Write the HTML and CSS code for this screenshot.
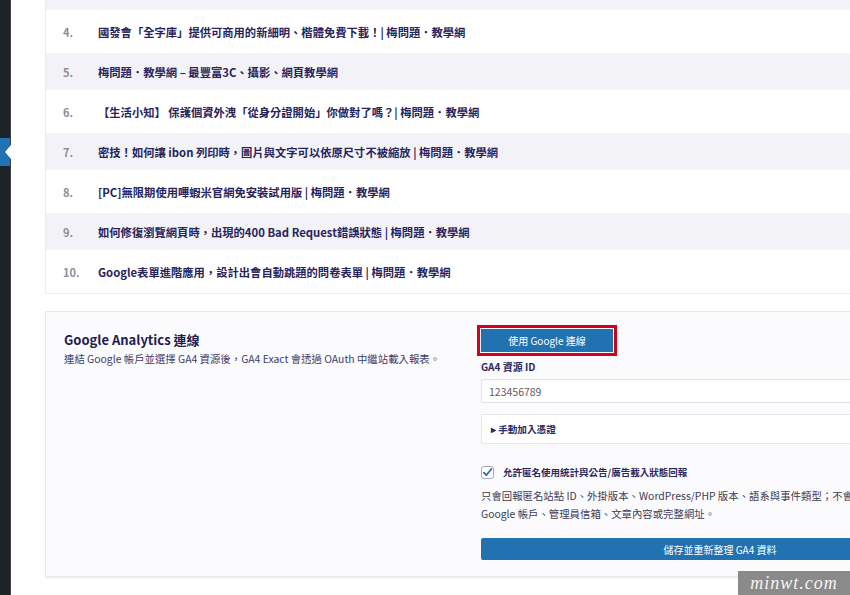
FILE: index.html
```html
<!DOCTYPE html>
<html lang="zh-Hant">
<head>
    <meta charset="UTF-8">
    <meta name="viewport" content="width=device-width, initial-scale=1.0">
    <title>GA4 Exact 設定</title>
    <link rel="stylesheet" href="styles.css">
</head>
<body>

    <div class="screen">
        <aside class="admin-menu">
            <span class="menu-current"></span>
        </aside>

        <main class="content">
            <!-- popular posts list, cropped at the top -->
            <ol class="top-list">
                <li class="alt cut"></li>
                <li><span class="num">4.</span><span class="title">國發會「全字庫」提供可商用的新細明、楷體免費下載！| 梅問題．教學網</span></li>
                <li class="alt"><span class="num">5.</span><span class="title">梅問題．教學網 – 最豐富3C、攝影、網頁教學網</span></li>
                <li><span class="num">6.</span><span class="title">【生活小知】 保護個資外洩「從身分證開始」你做對了嗎？| 梅問題．教學網</span></li>
                <li class="alt"><span class="num">7.</span><span class="title">密技！如何讓 ibon 列印時，圖片與文字可以依原尺寸不被縮放 | 梅問題．教學網</span></li>
                <li><span class="num">8.</span><span class="title">[PC]無限期使用嗶蝦米官網免安裝試用版 | 梅問題．教學網</span></li>
                <li class="alt"><span class="num">9.</span><span class="title">如何修復瀏覽網頁時，出現的400 Bad Request錯誤狀態 | 梅問題．教學網</span></li>
                <li><span class="num">10.</span><span class="title">Google表單進階應用，設計出會自動跳題的問卷表單 | 梅問題．教學網</span></li>
            </ol>

            <section class="ga-box">
                <div class="ga-intro">
                    <h2>Google Analytics 連線</h2>
                    <p>連結 Google 帳戶並選擇 GA4 資源後，GA4 Exact 會透過 OAuth 中繼站載入報表。</p>
                </div>

                <div class="ga-form">
                    <button class="btn connect-btn">使用 Google 連線</button>
                    <label class="field-label">GA4 資源 ID</label>
                    <div class="text-input">123456789</div>
                    <div class="manual-box">▸ 手動加入憑證</div>
                    <div class="check-row">
                        <span class="checkbox">
                            <svg width="11" height="11" viewBox="0 0 11 11"><path d="M1.8 5.6 L4.3 8.2 L9.4 2" fill="none" stroke="#2271b1" stroke-width="1.8" stroke-linecap="round" stroke-linejoin="round"/></svg>
                        </span>
                        <span class="check-label">允許匿名使用統計與公告/廣告載入狀態回報</span>
                    </div>
                    <p class="note">只會回報匿名站點 ID、外掛版本、WordPress/PHP 版本、語系與事件類型；不會回報<br>Google 帳戶、管理員信箱、文章內容或完整網址。</p>
                    <button class="btn save-btn">儲存並重新整理 GA4 資料</button>
                </div>
            </section>
        </main>
    </div>

    <!-- watermark over the corner -->
    <div class="watermark">minwt.com</div>

</body>
</html>
```

FILE: styles.css
```css
body {
    margin: 0;
    width: 850px;
    height: 595px;
    overflow: hidden;
    background-color: #ffffff;
    font-family: "Noto Sans CJK TC", "Noto Sans", sans-serif;
    position: relative;
}

.screen {
    display: flex;
    width: 1100px;
    height: 595px;
}

.admin-menu {
    width: 10px;
    flex-shrink: 0;
    background-color: #1d2327;
    border-right: 1px solid #3c434a;
    position: relative;
}

/* current menu item highlight with the little white arrow */
.menu-current {
    position: absolute;
    left: 0;
    top: 138px;
    width: 10px;
    height: 28px;
    background-color: #2271b1;
}

.menu-current::after {
    content: "";
    position: absolute;
    right: -1px;
    top: 7px;
    border-top: 7px solid transparent;
    border-bottom: 7px solid transparent;
    border-right: 6px solid #ffffff;
}

.content {
    padding-left: 34px;
}

.top-list {
    width: 960px;
    margin: 0;
    padding: 0;
    list-style: none;
    border-left: 1px solid #ebebf0;
    border-bottom: 1px solid #efeff3;
}

.top-list li {
    display: flex;
    align-items: center;
    height: 43px;
    padding-left: 17px;
    background-color: #ffffff;
}

.top-list li.alt {
    height: 37px;
    background-color: #f3f2f7;
}

.top-list li.cut {
    height: 10px;
}

.num {
    width: 35px;
    font-size: 11px;
    font-weight: 700;
    color: #8d8c9a;
}

.title {
    font-size: 11.3px;
    font-weight: 700;
    color: #27245c;
}

.ga-box {
    width: 960px;
    margin-top: 17px;
    padding: 17px 0 16px 18px;
    display: grid;
    grid-template-columns: 397px 478px;
    column-gap: 20px;
    background-color: #fbfbfe;
    border: 1px solid #e7e7ed;
    box-shadow: 0 2px 0 #f3f3f6;
}

.ga-intro h2 {
    margin: 3px 0 0;
    font-size: 13px;
    line-height: 16px;
    font-weight: 700;
    color: #1f1d4f;
}

.ga-intro p {
    margin: 4px 0 0;
    font-size: 10.4px;
    line-height: 14px;
    color: #3e3c6c;
}

.ga-form {
    display: flex;
    flex-direction: column;
    align-items: flex-start;
}

.btn {
    border: none;
    border-radius: 2px;
    background-color: #2271b1;
    color: #ffffff;
    font-family: inherit;
    font-size: 10px;
    padding: 0;
    cursor: pointer;
}

.connect-btn {
    width: 132px;
    height: 23px;
    border-radius: 0;
    outline: 3px solid #d0021b;
    outline-offset: 1px;
}

.field-label {
    margin-top: 8px;
    font-size: 10px;
    line-height: 14px;
    font-weight: 700;
    color: #2b2960;
}

.text-input {
    box-sizing: border-box;
    width: 100%;
    height: 24px;
    margin-top: 5px;
    padding-left: 7px;
    display: flex;
    align-items: center;
    background-color: #ffffff;
    border: 1px solid #e2e2e6;
    border-radius: 2px;
    font-size: 10.5px;
    color: #5c5c66;
}

.manual-box {
    box-sizing: border-box;
    width: 100%;
    height: 30px;
    margin-top: 11px;
    padding-left: 9px;
    display: flex;
    align-items: center;
    background-color: #ffffff;
    border: 1px solid #e6e6ea;
    font-size: 9.6px;
    font-weight: 700;
    color: #2b2960;
}

.check-row {
    margin-top: 21px;
    display: flex;
    align-items: center;
}

.checkbox {
    box-sizing: border-box;
    width: 13px;
    height: 13px;
    display: flex;
    align-items: center;
    justify-content: center;
    background-color: #ffffff;
    border: 1px solid #a7aab0;
    border-radius: 3px;
}

.check-label {
    margin-left: 9px;
    font-size: 9.5px;
    font-weight: 700;
    color: #2b2960;
}

.note {
    margin: 8px 0 0;
    font-size: 10.4px;
    line-height: 18px;
    color: #3d3c55;
    white-space: nowrap;
}

.save-btn {
    width: 100%;
    height: 22px;
    margin-top: 15px;
}

.watermark {
    position: absolute;
    left: 738px;
    top: 571px;
    width: 112px;
    height: 24px;
    background-color: #8a8a8a;
    color: #f4f4f4;
    font-family: "Liberation Serif", serif;
    font-style: italic;
    font-size: 18px;
    line-height: 24px;
    letter-spacing: 1px;
    text-align: center;
}
```
